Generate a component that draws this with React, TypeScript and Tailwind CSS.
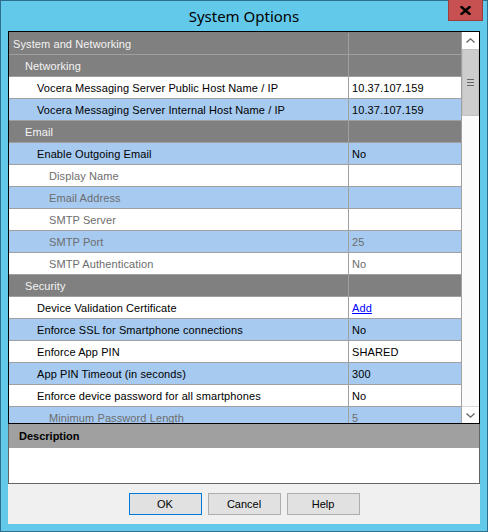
import React from 'react'

type Row = {
  label: string
  value?: string
  kind: 'cat' | 'item'
  indent: number
  bg?: 'white' | 'blue'
  disabled?: boolean
  link?: boolean
}

const rows: Row[] = [
  { label: 'System and Networking', kind: 'cat', indent: 4 },
  { label: 'Networking', kind: 'cat', indent: 16 },
  { label: 'Vocera Messaging Server Public Host Name / IP', value: '10.37.107.159', kind: 'item', indent: 28, bg: 'white' },
  { label: 'Vocera Messaging Server Internal Host Name / IP', value: '10.37.107.159', kind: 'item', indent: 28, bg: 'blue' },
  { label: 'Email', kind: 'cat', indent: 16 },
  { label: 'Enable Outgoing Email', value: 'No', kind: 'item', indent: 28, bg: 'blue' },
  { label: 'Display Name', kind: 'item', indent: 40, bg: 'white', disabled: true },
  { label: 'Email Address', kind: 'item', indent: 40, bg: 'blue', disabled: true },
  { label: 'SMTP Server', kind: 'item', indent: 40, bg: 'white', disabled: true },
  { label: 'SMTP Port', value: '25', kind: 'item', indent: 40, bg: 'blue', disabled: true },
  { label: 'SMTP Authentication', value: 'No', kind: 'item', indent: 40, bg: 'white', disabled: true },
  { label: 'Security', kind: 'cat', indent: 16 },
  { label: 'Device Validation Certificate', value: 'Add', kind: 'item', indent: 28, bg: 'white', link: true },
  { label: 'Enforce SSL for Smartphone connections', value: 'No', kind: 'item', indent: 28, bg: 'blue' },
  { label: 'Enforce App PIN', value: 'SHARED', kind: 'item', indent: 28, bg: 'white' },
  { label: 'App PIN Timeout (in seconds)', value: '300', kind: 'item', indent: 28, bg: 'blue' },
  { label: 'Enforce device password for all smartphones', value: 'No', kind: 'item', indent: 28, bg: 'white' },
  { label: 'Minimum Password Length', value: '5', kind: 'item', indent: 40, bg: 'blue', disabled: true },
]

function GridRow({ row }: { row: Row }) {
  const bg =
    row.kind === 'cat' ? 'bg-[#808080] text-[#f4f4f4]' : row.bg === 'blue' ? 'bg-[#a6caf0]' : 'bg-white'
  const text = row.kind === 'cat' ? '' : row.disabled ? 'text-[#6d6d6d]' : 'text-black'
  return (
    <div className={`flex h-[22px] shrink-0 border-b border-[#a0a0a0] ${bg} ${text}`}>
      <div className="w-[340px] shrink-0 border-r border-[#a0a0a0] pt-[1px] leading-[20px] whitespace-nowrap overflow-hidden tracking-[0.1px]" style={{ paddingLeft: row.indent }}>
        {row.label}
      </div>
      <div className="flex-1 pl-[3px] pt-[1px] leading-[20px] whitespace-nowrap tracking-[0.1px]">
        {row.link ? <span className="text-[#0000ff] underline">{row.value}</span> : row.value}
      </div>
    </div>
  )
}

function Chevron({ up }: { up?: boolean }) {
  return (
    <svg width="9" height="5" viewBox="0 0 9 5">
      <path d={up ? 'M0.5 4.5 L4.5 0.8 L8.5 4.5' : 'M0.5 0.5 L4.5 4.2 L8.5 0.5'} fill="none" stroke="#606060" strokeWidth="1.2" />
    </svg>
  )
}

export default function App() {
  return (
    <div
      className="w-[488px] h-[532px] bg-[#63c9ea] border border-[#2d6f8c] flex flex-col text-[11px]"
      style={{ fontFamily: '"Liberation Sans", Arial, sans-serif' }}
    >
      {/* Title bar */}
      <div className="relative h-[30px] shrink-0 flex items-center justify-center">
        <span className="text-[15px] text-black" style={{ fontFamily: '"Noto Sans", "Open Sans", sans-serif' }}>
          System Options
        </span>
        <div className="absolute top-[-1px] right-[4px] w-[35px] h-[21px] bg-[#c75050] border border-[#9e3b3b] border-t-0 flex items-center justify-center">
          <svg width="11" height="9" viewBox="0 0 11 9">
            <path d="M1.5 1 L9.5 8 M9.5 1 L1.5 8" stroke="#000" strokeWidth="2.4" strokeLinecap="square" />
          </svg>
        </div>
      </div>

      {/* Client area */}
      <div className="mx-[7px] flex flex-col flex-1">
        {/* Property grid */}
        <div className="h-[393px] shrink-0 border border-black flex overflow-hidden">
          <div className="flex-1 flex flex-col overflow-hidden border-r border-[#a0a0a0] pt-[1px] bg-[#808080]">
            {rows.map((r, i) => (
              <GridRow key={i} row={r} />
            ))}
          </div>
          <div className="w-[17px] shrink-0 flex flex-col bg-[#fbfbfb]">
            <div className="h-[17px] bg-white flex items-center justify-center">
              <Chevron up />
            </div>
            <div className="h-[67px] bg-[#cdcdcd] border border-[#c2c2c2] flex flex-col items-center justify-center gap-[2px]">
              <div className="w-[7px] h-[1px] bg-[#666]" />
              <div className="w-[7px] h-[1px] bg-[#666]" />
              <div className="w-[7px] h-[1px] bg-[#666]" />
            </div>
            <div className="flex-1" />
            <div className="h-[17px] bg-white border-t border-[#dadada] flex items-center justify-center">
              <Chevron />
            </div>
          </div>
        </div>

        {/* Description */}
        <div className="h-[60px] shrink-0 border border-t-0 border-[#646464] flex flex-col">
          <div className="h-[24px] bg-[#a0a0a0] flex items-center pl-[10px] font-bold text-black">Description</div>
          <div className="flex-1 bg-white" />
        </div>

        {/* Buttons */}
        <div className="h-[40px] shrink-0 bg-[#f0f0f0] flex justify-center gap-[6px] pt-[9px]">
          <button className="w-[73px] h-[22px] bg-[#e1e1e1] border border-[#0078d7] text-black">OK</button>
          <button className="w-[73px] h-[22px] bg-[#e1e1e1] border border-[#adadad] text-black">Cancel</button>
          <button className="w-[73px] h-[22px] bg-[#e1e1e1] border border-[#adadad] text-black">Help</button>
        </div>
      </div>
      <div className="h-[7px] shrink-0" />
    </div>
  )
}
